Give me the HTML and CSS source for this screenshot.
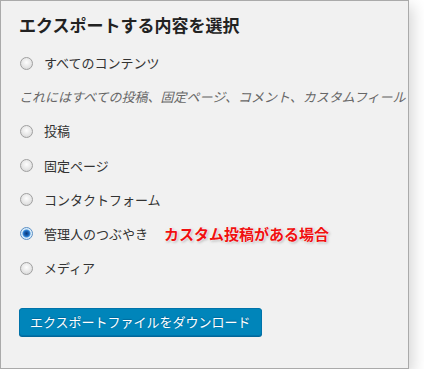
FILE: index.html
```html
<!DOCTYPE html>
<html lang="ja">
<head>
    <meta charset="UTF-8">
    <meta name="viewport" content="width=device-width, initial-scale=1.0">
    <title>エクスポート</title>
    <link rel="stylesheet" href="styles.css">
</head>
<body>
    <!--Export options box-->
    <div class="panel">
        <h2 class="title">エクスポートする内容を選択</h2>
        <ul class="choices">
            <li><label class="choice"><input type="radio" name="content"> すべてのコンテンツ</label></li>
            <li class="desc">これにはすべての投稿、固定ページ、コメント、カスタムフィールド、ターム、ナビゲーションメニュー、カスタム投稿が含まれます。</li>
            <li><label class="choice"><input type="radio" name="content"> 投稿</label></li>
            <li><label class="choice"><input type="radio" name="content"> 固定ページ</label></li>
            <li><label class="choice"><input type="radio" name="content"> コンタクトフォーム</label></li>
            <li><label class="choice"><input type="radio" name="content" checked> 管理人のつぶやき</label><span class="note">カスタム投稿がある場合</span></li>
            <li><label class="choice"><input type="radio" name="content"> メディア</label></li>
        </ul>
        <button class="download" type="button">エクスポートファイルをダウンロード</button>
    </div>
</body>
</html>
```

FILE: styles.css
```css
body { /*White page behind the box*/
    margin: 0;
    background: #fff;
    font-family: "Noto Sans CJK JP", "DejaVu Sans", sans-serif;
    color: #333;
}
.panel {
    box-sizing: border-box;
    width: 409px;
    height: 369px;
    padding: 12px 18px 0;
    border: 1px solid #aaa;
    background: #f1f1f1;
    box-shadow: 4px 6px 14px rgba(0, 0, 0, 0.16);
    overflow: hidden;
    white-space: nowrap;
}
.title {
    margin: 0;
    font-size: 17px;
    line-height: 24px;
    font-weight: bold;
    color: #222;
}
/*Radio list*/
.choices {
    list-style: none;
    margin: 16px 0 0;
    padding: 0;
    display: flex;
    flex-direction: column;
    gap: 14.2px;
}
.choices li {
    height: 20px;
    display: flex;
    align-items: center;
    font-size: 13px;
    line-height: 20px;
}
.choice {
    display: flex;
    align-items: center;
    gap: 11px;
    color: #333;
}
.choice input {
    appearance: none;
    -webkit-appearance: none;
    width: 13px;
    height: 13px;
    margin: 0 0 0 1px;
    border: 1px solid #a0a0a0;
    border-radius: 50%;
    background: radial-gradient(circle at 50% 40%, #fdfdfd 0, #e6e6e6 55%, #cfcfcf 100%);
    box-sizing: border-box;
}
.choice input:checked {
    border-color: #5b8fc4;
    background: radial-gradient(circle, #0c3a78 0, #1a64b8 2.5px, #3c8fdc 3.5px, #d7ebfa 4.5px, #eef6fd 100%);
}
.desc {
    font-style: italic;
    color: #666;
}
.note { /*Red annotation*/
    margin-left: 16px;
    font-size: 15px;
    font-weight: bold;
    color: #f01010;
    text-shadow: 0 0 2px #fff, 0 0 2px #fff, 1px 1px 3px rgba(0, 0, 0, 0.35);
}
/*Download button*/
.download {
    margin-top: 30px;
    height: 28px;
    padding: 0 10px;
    border: 1px solid #0073aa;
    border-radius: 3px;
    background: #0085ba;
    box-shadow: 0 1px 0 #006799;
    color: #fff;
    font-family: inherit;
    font-size: 13px;
    line-height: 26px;
    text-shadow: 0 -1px 1px #006799;
}
```
